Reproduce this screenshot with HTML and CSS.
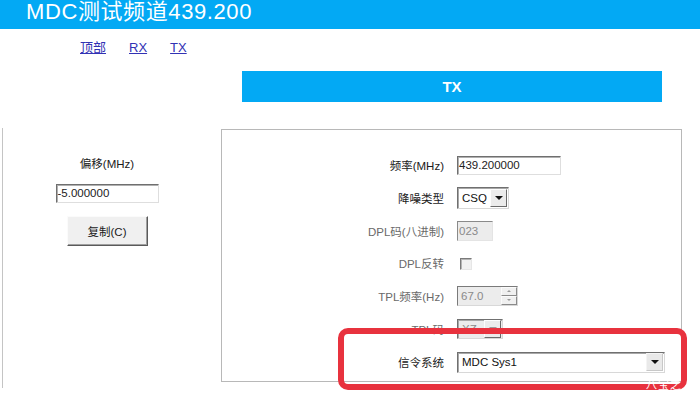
FILE: index.html
```html
<!DOCTYPE html>
<html lang="zh-CN">
<head>
<meta charset="utf-8">
<title>MDC测试频道439.200</title>
<link rel="stylesheet" href="styles.css">
</head>
<body>
<header class="topbar"><h1 class="title">MDC测试频道439.200</h1></header>
<nav class="links"><a href="#top">顶部</a><a href="#rx">RX</a><a href="#tx">TX</a></nav>
<div class="section-bar" id="tx">TX</div>
<main class="panels">
  <section class="offset-panel">
    <div class="offset-label">偏移(MHz)</div>
    <div class="field offset-input">-5.000000</div>
    <button class="btn" type="button">复制(C)</button>
  </section>
  <section class="tx-panel">
    <div class="lbl">频率(MHz)</div>
    <div class="field freq-input">439.200000</div>

    <div class="lbl">降噪类型</div>
    <div class="select select-csq"><span class="select-text">CSQ</span><span class="select-btn"><span class="caret"></span></span></div>

    <div class="lbl lbl-off">DPL码(八进制)</div>
    <div class="field field-off dpl-input">023</div>

    <div class="lbl lbl-off">DPL反转</div>
    <div class="checkbox"></div>

    <div class="lbl lbl-off">TPL频率(Hz)</div>
    <div class="spin"><span class="spin-text">67.0</span><span class="spin-btns"><span class="spin-up"><span class="tri-up"></span></span><span class="spin-down"><span class="tri-down"></span></span></span></div>

    <div class="lbl lbl-off">TPL码</div>
    <div class="select select-off select-tpl"><span class="select-text">XZ</span><span class="select-btn"><span class="caret caret-off"></span></span></div>

    <div class="lbl">信令系统</div>
    <div class="select select-sys"><span class="select-text">MDC Sys1</span><span class="select-btn flat"><span class="caret"></span></span></div>
  </section>
</main>
<div class="highlight"></div>
<div class="watermark">八宝之</div>
</body>
</html>
```
FILE: styles.css
```css
* { box-sizing: border-box; }

body {
  margin: 0;
  width: 700px;
  height: 397px;
  overflow: hidden;
  position: relative;
  background: #fff;
  color: #222;
  font-family: "Liberation Sans", Arial, "Noto Sans CJK SC", sans-serif;
}

.topbar {
  height: 29px;
  background: #03a9f4;
  padding: 1px 0 0 26px;
}

.title {
  margin: 0;
  font-size: 22px;
  line-height: 22px;
  font-weight: normal;
  color: #fff;
  letter-spacing: 0.6px;
}

.links {
  display: flex;
  gap: 23px;
  height: 42px;
  padding: 11px 0 0 80px;
  font-size: 13px;
  line-height: 16px;
}

.links a {
  color: #3232b4;
  text-decoration: underline;
}

.section-bar {
  margin-left: 242px;
  width: 420px;
  height: 31px;
  background: #03a9f4;
  color: #fff;
  font-weight: bold;
  font-size: 15px;
  line-height: 31px;
  text-align: center;
}

.panels {
  display: flex;
  align-items: flex-start;
  gap: 10px;
  margin-top: 26px;
  padding-left: 2px;
}

.offset-panel {
  width: 209px;
  height: 260px;
  border-left: 1px solid #c4c4c4;
  display: flex;
  flex-direction: column;
  align-items: center;
  padding-top: 20px;
}

.offset-label {
  height: 33px;
  line-height: 33px;
  font-size: 11.5px;
  color: #1a1a1a;
}

.field {
  height: 19px;
  border: 1px solid;
  border-color: #6f6f6f #dedede #dedede #6f6f6f;
  box-shadow: inset 1px 1px 0 #b0b0b0;
  background: #fff;
  font-size: 11.5px;
  line-height: 17px;
  padding-left: 1px;
  color: #222;
}

.offset-input {
  width: 103px;
  margin-top: 3px;
}

.btn {
  margin-top: 13px;
  width: 81px;
  height: 30px;
  background: #f0f0f0;
  border: 1px solid;
  border-color: #fbfbfb #5a5a5a #5a5a5a #fbfbfb;
  box-shadow: inset -1px -1px 0 #a0a0a0;
  font-family: inherit;
  font-size: 11.5px;
  color: #1a1a1a;
  padding: 0;
}

.tx-panel {
  width: 461px;
  height: 253px;
  margin-top: 1px;
  border: 1px solid #b8b8b8;
  display: grid;
  grid-template-columns: 222px 1fr;
  column-gap: 13px;
  grid-template-rows: 32px 33px 33px 32px 33px 33px 34px;
  align-items: center;
  align-content: start;
  justify-items: start;
  padding-top: 19px;
}

.lbl {
  justify-self: end;
  font-size: 11.5px;
  color: #1a1a1a;
}

.lbl-off { color: #6a6a6a; }

.freq-input { width: 104px; }

.field-off {
  background: #ececec;
  color: #8a8a8a;
  border-color: #8a8a8a #e4e4e4 #e4e4e4 #8a8a8a;
  box-shadow: none;
  height: 20px;
  line-height: 18px;
}

.dpl-input { width: 36px; }

.select {
  display: flex;
  align-items: center;
  height: 22px;
  border: 1px solid;
  border-color: #707070 #d8d8d8 #d8d8d8 #707070;
  box-shadow: inset 1px 1px 0 #a8a8a8;
  background: #fff;
  font-size: 11.5px;
}

.select-text {
  flex: 1;
  padding-left: 4px;
  color: #111;
}

.select-btn {
  width: 17px;
  height: 18px;
  margin-right: 1px;
  background: #ebebeb;
  border: 1px solid;
  border-color: #fdfdfd #6a6a6a #6a6a6a #fdfdfd;
  display: flex;
  align-items: center;
  justify-content: center;
}

.select-btn.flat {
  border-color: #f4f4f4 #c8c8c8 #c8c8c8 #f4f4f4;
  background: #e9e9e9;
  width: 17px;
}

.caret {
  width: 0;
  height: 0;
  border-left: 4px solid transparent;
  border-right: 4px solid transparent;
  border-top: 4px solid #111;
}

.caret-off { border-top-color: #9a9a9a; }

.select-csq { width: 52px; }

.select-off {
  background: #ececec;
  height: 20px;
}

.select-off .select-text { color: #8a8a8a; }

.select-tpl { width: 46px; }

.select-sys { width: 208px; height: 21px; }

.checkbox {
  width: 12px;
  height: 12px;
  margin-left: 3px;
  margin-top: 2px;
  border: 1px solid;
  border-color: #7a7a7a #e6e6e6 #e6e6e6 #7a7a7a;
  box-shadow: inset 1px 1px 0 #b4b4b4;
  background: #f1f1f1;
}

.spin {
  display: flex;
  width: 61px;
  height: 20px;
  border: 1px solid;
  border-color: #7a7a7a #d8d8d8 #d8d8d8 #7a7a7a;
  background: #ececec;
  font-size: 11.5px;
}

.spin-text {
  flex: 1;
  color: #8a8a8a;
  line-height: 18px;
  padding-left: 3px;
}

.spin-btns {
  width: 16px;
  display: flex;
  flex-direction: column;
}

.spin-up, .spin-down {
  flex: 1;
  background: #f0f0f0;
  border: 1px solid;
  border-color: #fbfbfb #8a8a8a #8a8a8a #fbfbfb;
  display: flex;
  align-items: center;
  justify-content: center;
}

.tri-up {
  width: 0;
  height: 0;
  border-left: 2px solid transparent;
  border-right: 2px solid transparent;
  border-bottom: 2px solid #9a9a9a;
}

.tri-down {
  width: 0;
  height: 0;
  border-left: 2px solid transparent;
  border-right: 2px solid transparent;
  border-top: 2px solid #9a9a9a;
}

.highlight {
  position: absolute;
  left: 338px;
  top: 328px;
  width: 349px;
  height: 62px;
  border: 6px solid #e8323e;
  border-radius: 10px;
}

.watermark {
  position: absolute;
  left: 646px;
  top: 379px;
  font-size: 11px;
  line-height: 12px;
  color: #fff;
  letter-spacing: 1px;
}
```
